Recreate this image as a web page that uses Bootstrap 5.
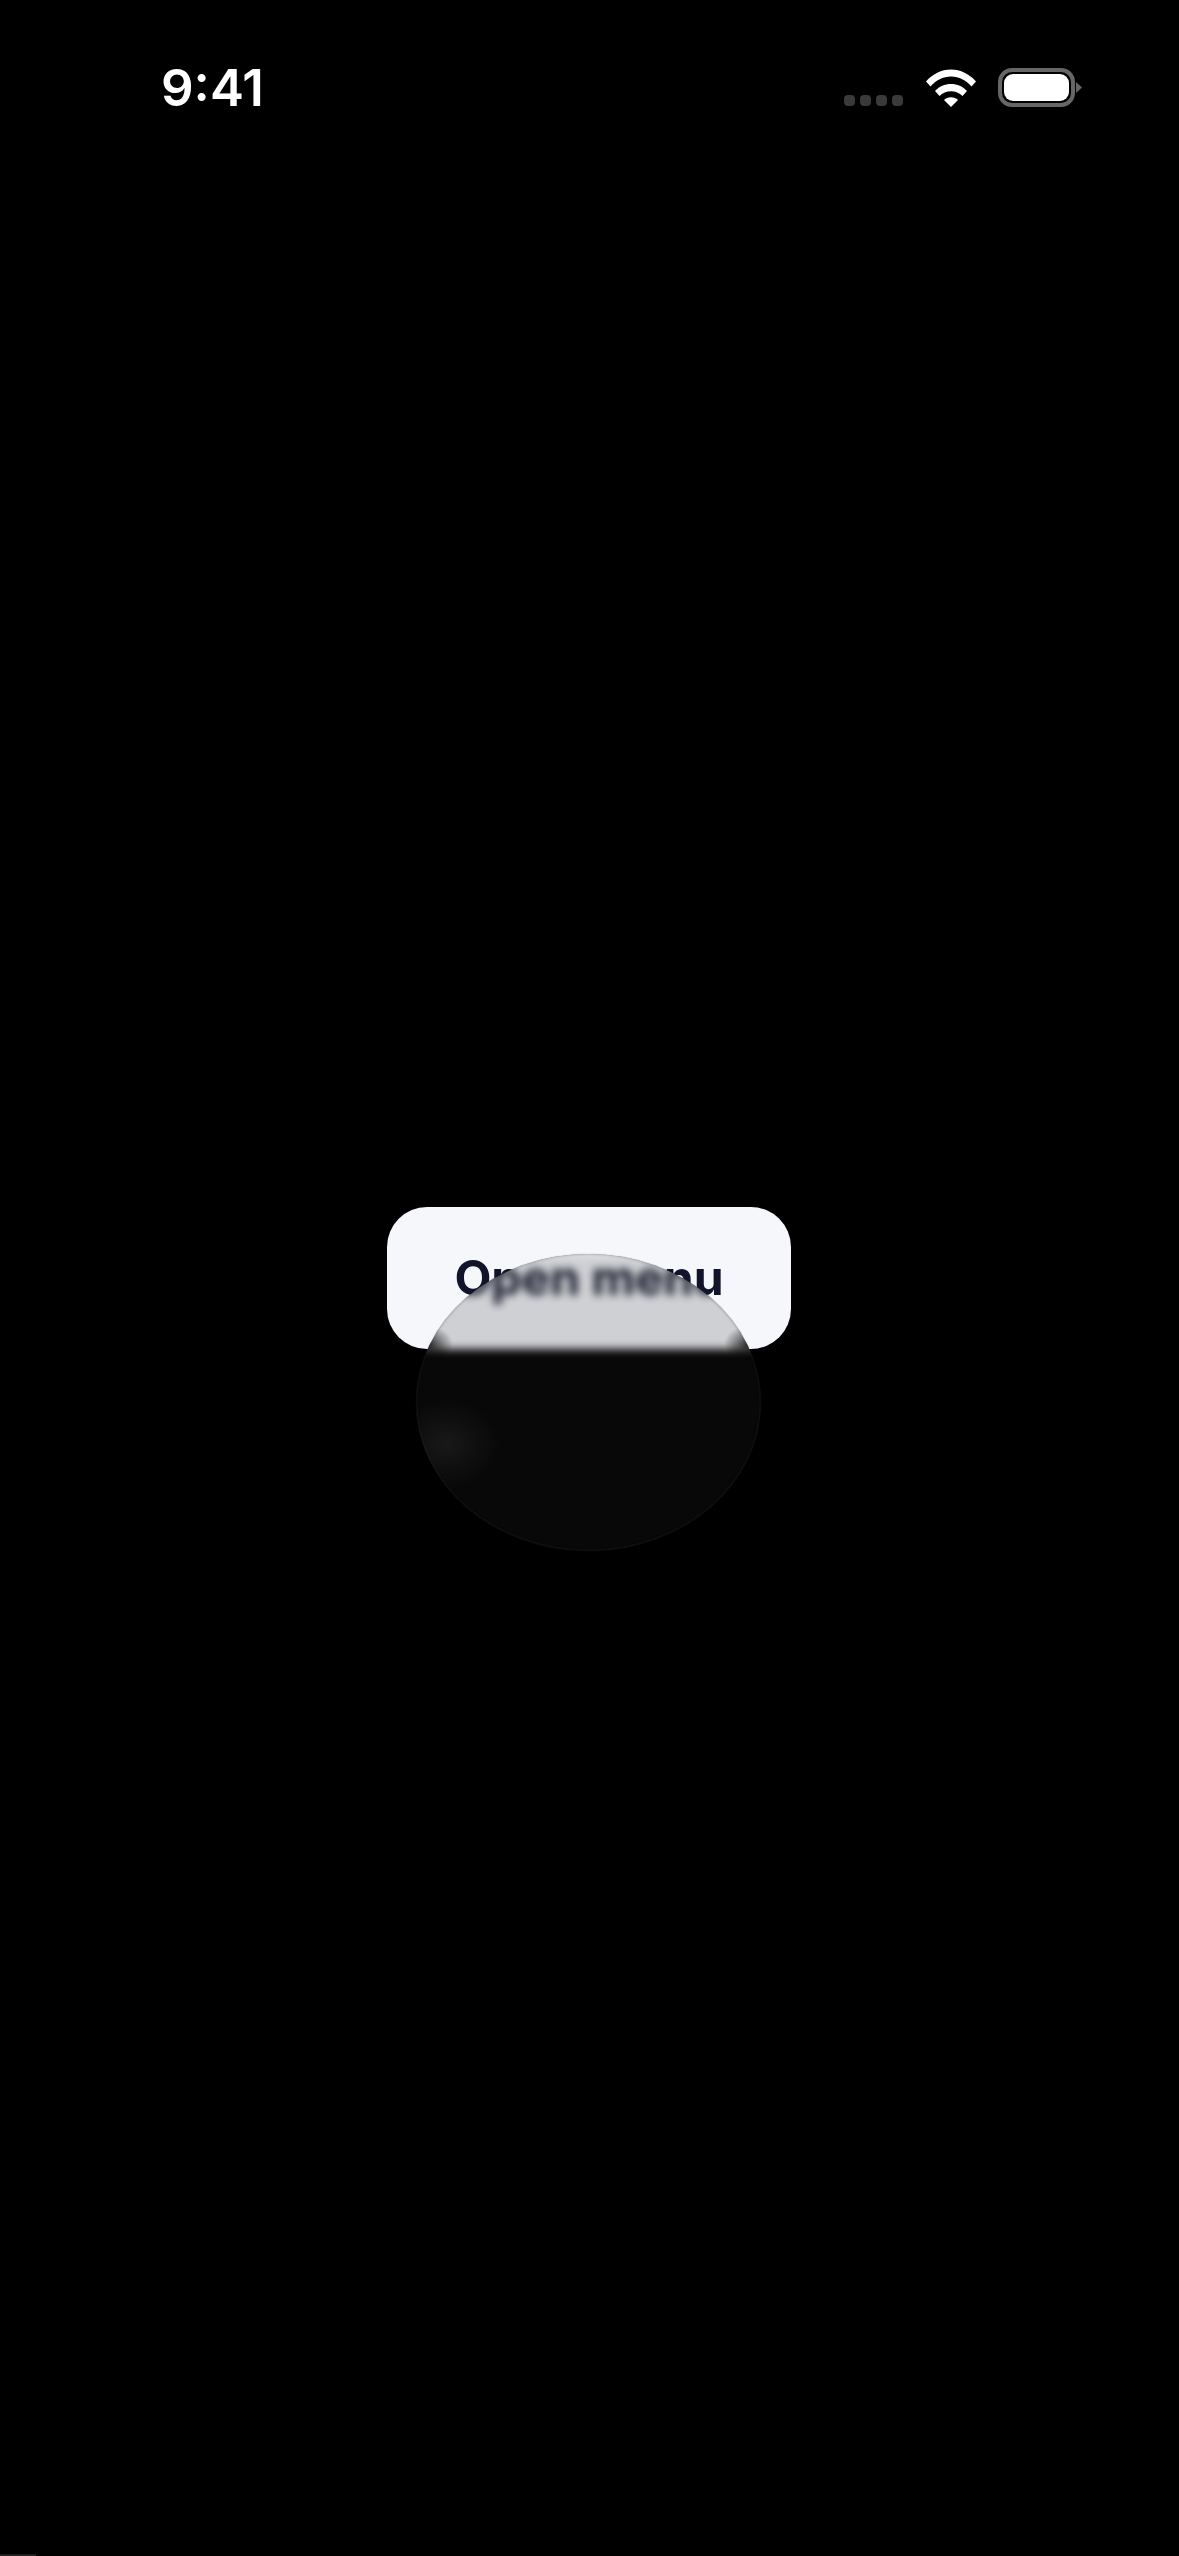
<!DOCTYPE html>
<html lang="en">
<head>
<meta charset="utf-8">
<title>Open menu</title>
<link href="https://cdn.jsdelivr.net/npm/bootstrap@5.3.0/dist/css/bootstrap.min.css" rel="stylesheet">
<style>
html, body { background: #000; margin: 0; }
body { font-family: Inter, "Liberation Sans", sans-serif; }
.stage { display: grid; height: 2556px; width: 1179px; overflow: hidden; position: relative; }
.stage > * { grid-area: 1 / 1; }
.status-row { align-self: start; height: 130px; padding: 61px 104px 0 161px; }
.clock { color: #fff; font-size: 51px; font-weight: 600; line-height: 54px; }
.signal-dots { gap: 5px; margin-top: 34px; }
.signal-dots span { width: 11px; height: 11px; border-radius: 4px; background: #3a3a3a; display: block; }
.wifi-icon { width: 50px; height: 38px; margin-left: 23px; margin-top: 8px; }
.battery-shell { width: 77px; height: 39px; margin-left: 22px; margin-top: 7px; border: 4px solid #666; border-radius: 14px; padding: 2px; background: #000; position: relative; }
.battery-fill { width: 100%; height: 100%; background: #fff; border-radius: 9px; }
.battery-cap { position: absolute; right: -11px; top: 10px; width: 6px; height: 11px; background: #666; clip-path: polygon(0 0, 100% 50%, 0 100%); }
.hero-wrap { place-self: center; margin-right: 1px; margin-bottom: 1px; position: relative; width: 404px; height: 142px; }
.menu-btn { width: 404px; height: 142px; border: 0; border-radius: 40px; background: #f5f7fb; color: #11142a; font-size: 48px; font-weight: 700; line-height: 58px; padding: 0; }
.menu-btn:hover, .menu-btn:active { background: #f5f7fb; color: #11142a; }
.glass-lens { position: absolute; left: 29px; top: 47px; width: 345px; height: 297px; border-radius: 50%; background: rgba(255,255,255,.03); -webkit-backdrop-filter: blur(4px) brightness(.84); backdrop-filter: blur(4px) brightness(.84); box-shadow: inset 0 0 0 1.5px rgba(255,255,255,.035), inset 0 0 3px rgba(0,0,0,.35), 0 0 1px rgba(40,40,50,.6); overflow: hidden; pointer-events: none; }
.glass-glint { position: absolute; left: -25px; top: 145px; width: 110px; height: 90px; border-radius: 50%; background: radial-gradient(closest-side, rgba(255,255,255,.065), rgba(255,255,255,0)); }
.glass-edge { position: absolute; inset: 0; background: radial-gradient(24px 18px at 13px 90px, rgba(0,0,0,.75), rgba(0,0,0,0)), radial-gradient(24px 18px at 332px 90px, rgba(0,0,0,.75), rgba(0,0,0,0)); }
.home-trace { position: absolute; left: 0; bottom: 0; width: 36px; height: 2px; background: #1e1e1e; }
</style>
</head>
<body>
<div class="stage">
  <div class="status-row d-flex align-items-start">
    <div class="clock me-auto">9:41</div>
    <div class="signal-dots d-flex"><span></span><span></span><span></span><span></span></div>
    <svg class="wifi-icon" viewBox="0 0 50 38" fill="#fff" aria-hidden="true">
      <path d="M0 12.5C6.5 5 15.5 0.5 25 0.5S43.5 5 50 12.5L45.5 17.5C40 11.3 33 7.6 25 7.6S10 11.3 4.500 17.5Z"/>
      <path d="M9 22C13 17.6 18.800 15 25 15S37 17.600 41 22L36.500 27C33.500 24 29.500 22.200 25 22.200S16.500 24 13.500 27Z"/>
      <path d="M18 31C19.800 29.300 22.200 28.300 25 28.300S30.200 29.300 32 31L25 38Z"/>
    </svg>
    <div class="battery-shell"><div class="battery-fill"></div><div class="battery-cap"></div></div>
  </div>
  <div class="hero-wrap">
    <button type="button" class="btn menu-btn">Open menu</button>
    <div class="glass-lens"><div class="glass-edge"></div><div class="glass-glint"></div></div>
  </div>
  <div class="home-trace"></div>
</div>
<script src="https://cdn.jsdelivr.net/npm/bootstrap@5.3.0/dist/js/bootstrap.bundle.min.js"></script>
</body>
</html>
